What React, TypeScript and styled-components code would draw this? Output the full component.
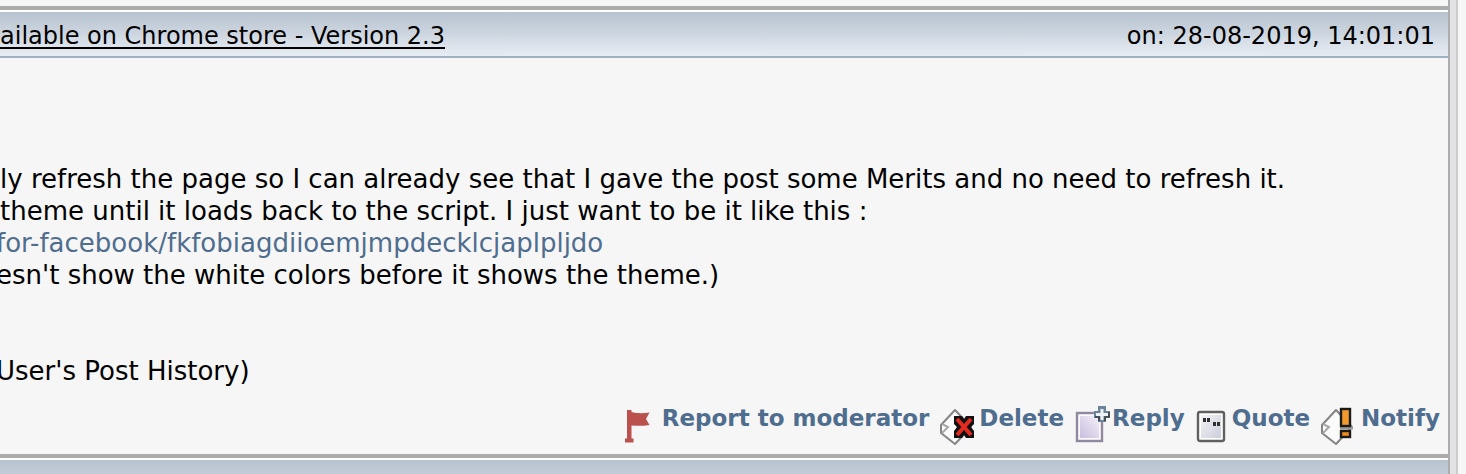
import React from "react";
import styled, { createGlobalStyle } from "styled-components";

const GlobalStyle = createGlobalStyle`
  * { box-sizing: border-box; }
  body {
    margin: 0;
    background: #f6f6f6;
    color: #000;
    font-family: Verdana, "DejaVu Sans", sans-serif;
  }
`;

const Page = styled.div`
  display: flex;
  min-height: 100vh;
`;

const Thread = styled.main`
  flex: 1;
  min-width: 0;
  padding-top: 6px;
  border-right: 2px solid #acacac;
  overflow: hidden;
`;

const Gutter = styled.div`
  width: 8px;
  margin-right: 8px;
  background: #e2e2e4;
  border-right: 2px solid #cccccc;
`;

const TitleBar = styled.header`
  display: flex;
  justify-content: space-between;
  height: 52px;
  padding: 4px 13px 0 0;
  border-top: 4px solid #acacac;
  border-bottom: 2px solid #9fb1c1;
  background: linear-gradient(#fff 2px, #b8c3d0 2px, #ccd5df 50%, #e8edf4);
  font-size: 24px;
  line-height: 44px;
  white-space: nowrap;
`;

const NextPostBar = styled.div`
  height: 20px;
  border-top: 4px solid #acacac;
  background: linear-gradient(#fff 2px, #b8c3d0 2px, #c2ccd8);
`;

const TitleLink = styled.a`
  color: #000;
  text-decoration: underline;
  text-decoration-thickness: 2px;
  text-underline-offset: 3px;
`;

const Message = styled.div`
  padding: 105px 0 15px;
  font-size: 26px;
  line-height: 32px;
  white-space: nowrap;
`;

const Line = styled.p<{ $outdent?: boolean }>`
  margin: 0 0 0 ${(p) => (p.$outdent ? -4 : 0)}px;
  min-height: 32px;
`;

const BodyLink = styled.a`
  color: #4f6d8f;
  text-decoration: none;
`;

const Actions = styled.nav`
  display: flex;
  justify-content: flex-end;
  gap: 11px;
  height: 52px;
  padding-right: 8px;
`;

const Action = styled.a<{ $gap: number }>`
  display: flex;
  gap: ${(p) => p.$gap}px;
  color: #4f6d8f;
  font-size: 23px;
  font-weight: bold;
  line-height: 32px;
  text-decoration: none;
  white-space: nowrap;
`;

const Icon = styled.svg`
  flex: none;
  margin-top: 4px;
`;

const FlagIcon = () => (
  <Icon width="26" height="40" viewBox="0 0 26 40" aria-hidden="true">
    <path d="M3 4h4.500v2c5 1.500 12 1.500 18 .500l-3.500 6.500 3.500 6c-6 1-12 1-18 .500v13h2v4H1v-4h2z" fill="#bb514c" />
  </Icon>
);

const Paper = () => (
  <>
    <path d="M15 4 31 21 15 38 1 27V19Z" fill="#fbfbfb" stroke="#858585" strokeWidth="2" strokeLinejoin="round" />
    <path d="M2 18 8 21 2 27" fill="#fff" stroke="#a8a8a8" strokeWidth="2" />
  </>
);

const DeleteIcon = () => (
  <Icon width="36" height="40" viewBox="0 0 36 40" aria-hidden="true">
    <Paper />
    <path d="M14 10h8l2 3 2-3h8v8l-3 3 3 4v7h-8l-2-3-2 3h-8v-7l3-4-3-3z" fill="#121010" />
    <path d="M17 13 31 29M31 13 17 29" stroke="#e32b20" strokeWidth="4" />
  </Icon>
);

const ReplyIcon = () => (
  <Icon width="36" height="40" viewBox="0 0 36 40" aria-hidden="true">
    <defs>
      <linearGradient id="replySheet" x1="1" y1="0" x2="0" y2="1">
        <stop offset="0" stopColor="#f4f0fb" />
        <stop offset="1" stopColor="#c8bddc" />
      </linearGradient>
    </defs>
    <rect x="2" y="7" width="25" height="28" fill="#fbf9ff" stroke="#8f889f" strokeWidth="2.4" />
    <rect x="5" y="10" width="19" height="22" fill="url(#replySheet)" />
    <path d="M23 0h8v5h4v7h-4v4h-8v-4h-4V5h4z" fill="#6c8498" />
    <path d="M24 15v-4h-4M30 15v-4h4V6" fill="none" stroke="#3a4248" strokeWidth="1.6" />
    <path d="M27 3v11M21 8.500h12" stroke="#eef2f5" strokeWidth="3" />
  </Icon>
);

const QuoteIcon = () => (
  <Icon width="30" height="40" viewBox="0 0 30 40" aria-hidden="true">
    <defs>
      <linearGradient id="quoteSheet" x1="0" y1="0" x2="1" y2="1">
        <stop offset="0" stopColor="#f3f3f6" />
        <stop offset="1" stopColor="#cbcddb" />
      </linearGradient>
    </defs>
    <rect x="2" y="6" width="26" height="29" rx="2" fill="#fff" stroke="#606060" strokeWidth="2.4" />
    <rect x="5" y="9" width="20" height="23" fill="url(#quoteSheet)" />
    <path d="M7 12h3v4H7zM11 12h3v4h-3zM17 16h3v4h-3zM21 16h3v4h-3z" fill="#303030" />
  </Icon>
);

const NotifyIcon = () => (
  <Icon width="34" height="40" viewBox="0 0 34 40" aria-hidden="true">
    <Paper />
    <path d="M19 22h13" stroke="#999" strokeWidth="3" />
    <rect x="20" y="3" width="9" height="17" fill="#f29a2e" stroke="#1c1a17" strokeWidth="2.4" />
    <rect x="20" y="25" width="9" height="6" fill="#ec8d22" stroke="#1c1a17" strokeWidth="2.4" />
  </Icon>
);

const actions = [
  { label: "Report to moderator", icon: <FlagIcon />, gap: 12 },
  { label: "Delete", icon: <DeleteIcon />, gap: 3 },
  { label: "Reply", icon: <ReplyIcon />, gap: 1 },
  { label: "Quote", icon: <QuoteIcon />, gap: 6 },
  { label: "Notify", icon: <NotifyIcon />, gap: 6 },
];

export default function App() {
  return (
    <>
      <GlobalStyle />
      <Page>
        <Thread>
          <article>
            <TitleBar>
              <TitleLink href="#topic">ailable on Chrome store - Version 2.3</TitleLink>
              <time dateTime="2019-08-28T14:01:01">on: 28-08-2019, 14:01:01</time>
            </TitleBar>
            <Message>
              <Line>ly refresh the page so I can already see that I gave the post some Merits and no need to refresh it.</Line>
              <Line>theme until it loads back to the script. I just want to be it like this :</Line>
              <Line $outdent>
                <BodyLink href="#store">for-facebook/fkfobiagdiioemjmpdecklcjaplpljdo</BodyLink>
              </Line>
              <Line $outdent>esn't show the white colors before it shows the theme.)</Line>
              <Line />
              <Line />
              <Line $outdent>User's Post History)</Line>
            </Message>
            <Actions aria-label="Post actions">
              {actions.map((a) => (
                <Action key={a.label} href="#action" $gap={a.gap}>
                  {a.icon}
                  {a.label}
                </Action>
              ))}
            </Actions>
          </article>
          <NextPostBar />
        </Thread>
        <Gutter />
      </Page>
    </>
  );
}
